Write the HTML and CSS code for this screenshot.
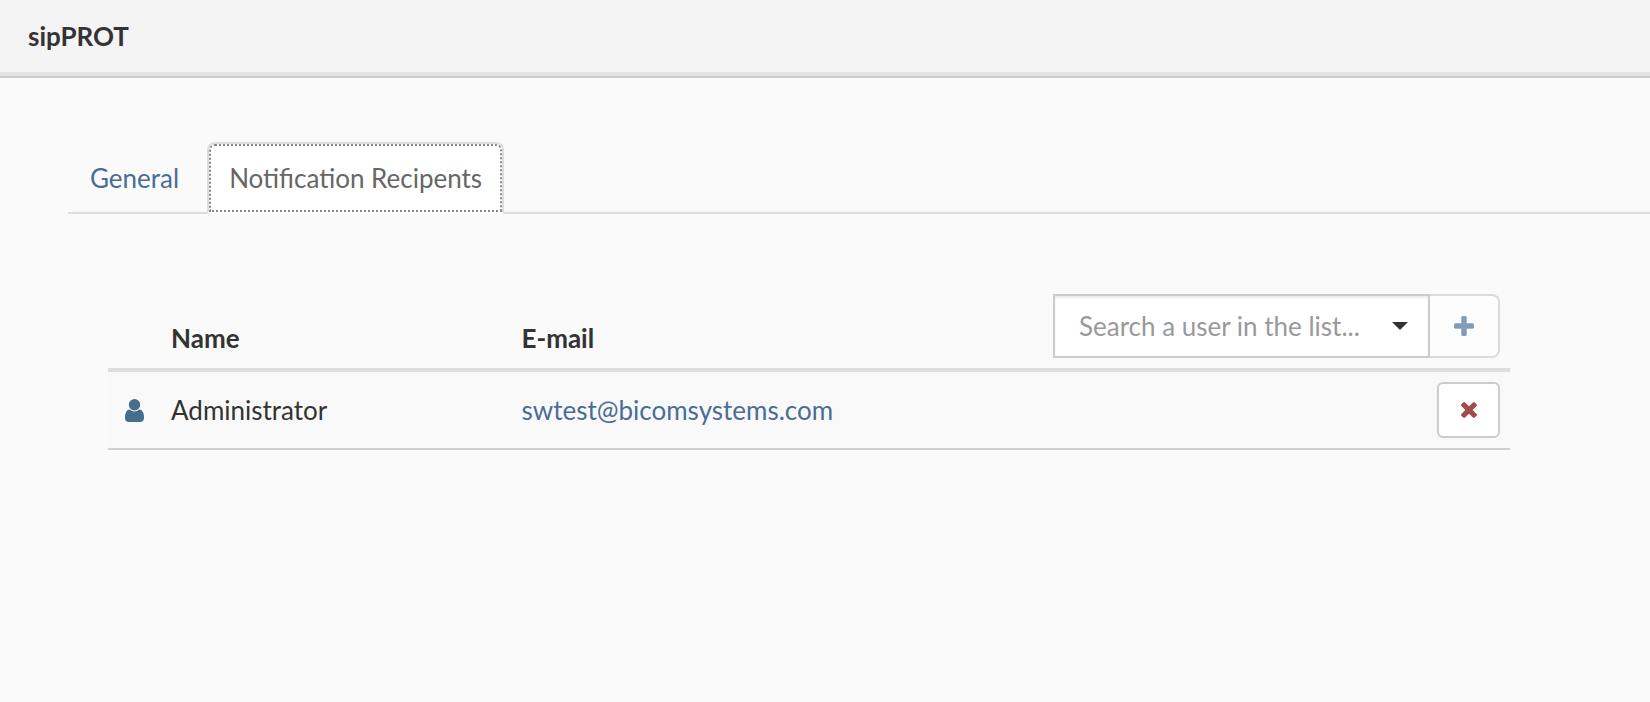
FILE: index.html
```html
<!DOCTYPE html>
<html lang="en">

<head>
  <meta charset="utf-8">
  <title>sipPROT</title>
  <link rel="stylesheet" href="styles.css">
</head>

<body>
  <header class="page-header">
    <h1>sipPROT</h1>
  </header>

  <main class="content">
    <nav class="tabs">
      <a class="tab" href="#general">General</a>
      <a class="tab active" href="#recipients">Notification Recipents</a>
    </nav>

    <section class="panel" id="recipients">
      <table class="recipients">
        <thead>
          <tr>
            <th class="col-icon"></th>
            <th class="col-name">Name</th>
            <th class="col-email">E-mail</th>
            <th class="col-actions">
              <div class="user-search">
                <div class="select-wrap">
                  <select id="user-select" aria-label="Search a user in the list">
                    <option>Search a user in the list...</option>
                  </select>
                  <svg class="caret" viewBox="0 0 16 8"><path d="M0 0h16L8 8z"/></svg>
                </div>
                <button class="btn-add" type="button" aria-label="Add" disabled>
                  <svg viewBox="192 128 1408 1408"><path d="M1600 736v192q0 40-28 68t-68 28h-416v416q0 40-28 68t-68 28h-192q-40 0-68-28t-28-68v-416h-416q-40 0-68-28t-28-68v-192q0-40 28-68t68-28h416v-416q0-40 28-68t68-28h192q40 0 68 28t28 68v416h416q40 0 68 28t28 68z"/></svg>
                </button>
              </div>
            </th>
          </tr>
        </thead>
        <tbody>
          <tr>
            <td class="col-icon">
              <svg class="icon-user" viewBox="256 128 1280 1536"><path d="M1536 1399q0 109-62.5 187t-150.5 78h-854q-88 0-150.5-78t-62.5-187q0-85 8.5-160.5t31.5-152 58.5-131 94-89 134.5-34.5q131 128 313 128t313-128q76 0 134.5 34.5t94 89 58.5 131 31.5 152 8.5 160.5zm-256-887q0 159-112.5 271.5t-271.5 112.5-271.5-112.5-112.5-271.5 112.5-271.5 271.5-112.5 271.5 112.5 112.5 271.5z"/></svg>
            </td>
            <td>Administrator</td>
            <td><a href="mailto:swtest@bicomsystems.com">swtest@bicomsystems.com</a></td>
            <td class="col-actions">
              <button class="btn-remove" type="button" aria-label="Remove">
                <svg viewBox="302 366 1188 1188"><path d="M1490 1322q0 40-28 68l-136 136q-28 28-68 28t-68-28l-294-294-294 294q-28 28-68 28t-68-28l-136-136q-28-28-28-68t28-68l294-294-294-294q-28-28-28-68t28-68l136-136q28-28 68-28t68 28l294 294 294-294q28-28 68-28t68 28l136 136q28 28 28 68t-28 68l-294 294 294 294q28 28 28 68z"/></svg>
              </button>
            </td>
          </tr>
        </tbody>
      </table>
    </section>
  </main>
</body>

</html>
```

FILE: styles.css
```css
* {
  box-sizing: border-box;
}

body {
  margin: 0;
  background-color: #fafafa;
  color: #333;
  font-family: Lato, "Liberation Sans", sans-serif;
  font-size: 26px;
  line-height: 36px;
}

a {
  color: #4a6d98;
  text-decoration: none;
}

svg {
  display: block;
  fill: currentColor;
}

.page-header {
  padding: 18px 28px 22px;
  background-color: #f4f4f4;
  border-bottom: 2px solid #ccc;
  box-shadow: inset 0 -4px #e3e3e3;
}

.page-header h1 {
  margin: 0;
  font-size: 26px;
  font-weight: bold;
}

.content {
  padding: 64px 0 0 68px;
}

/* tabs */
.tabs {
  display: flex;
  gap: 6px;
  border-bottom: 2px solid #ddd;
}

.tab {
  padding: 16px 20px;
  margin-bottom: -2px;
  border: 2px solid transparent;
  border-radius: 8px 8px 0 0;
}

.tab.active {
  color: #666;
  background-color: #fff;
  border-color: #ddd;
  border-bottom-color: #fff;
  outline: 2px dotted #888;
  outline-offset: -4px;
}

.panel {
  padding: 70px 140px 0 40px;
}

/* recipients table */
.recipients {
  width: 100%;
  table-layout: fixed;
  border-collapse: separate;
  border-spacing: 0;
}

.recipients th,
.recipients td {
  padding: 10px;
  text-align: left;
}

.recipients th {
  line-height: 40px;
  vertical-align: bottom;
  border-bottom: 4px solid #ddd;
}

.recipients td {
  background-color: #f9f9f9;
  border-bottom: 2px solid #d0d0d0;
}

.recipients .col-icon {
  width: 53px;
}

.col-name,
.col-email {
  width: 25%;
}

.recipients th.col-actions,
.recipients td.col-actions {
  text-align: right;
}

.icon-user {
  width: 19px;
  height: 23px;
  margin: 0 auto;
  color: #446e8c;
}

/* user search */
.user-search {
  display: flex;
  justify-content: flex-end;
}

.select-wrap {
  position: relative;
  width: 377px;
}

.select-wrap select {
  display: block;
  width: 100%;
  height: 64px;
  padding: 0 24px;
  appearance: none;
  border: 2px solid #ccc;
  border-radius: 0;
  background-color: #fff;
  box-shadow: inset 0 2px 2px rgba(0, 0, 0, 0.075);
  color: #999;
  font: inherit;
  font-weight: normal;
}

.caret {
  position: absolute;
  top: 28px;
  right: 22px;
  width: 16px;
  height: 8px;
  color: #333;
  pointer-events: none;
}

button {
  display: inline-flex;
  align-items: center;
  justify-content: center;
  padding: 0;
  background-color: #fff;
  border: 2px solid #ccc;
  border-radius: 6px;
}

.btn-add {
  width: 70px;
  height: 64px;
  border-left: none;
  border-radius: 0 8px 8px 0;
  color: #426a9b;
  opacity: 0.65;
}

.btn-add svg {
  width: 20px;
  height: 20px;
}

.btn-remove {
  width: 63px;
  height: 56px;
  vertical-align: top;
  color: #a04c48;
}

.btn-remove svg {
  width: 16px;
  height: 16px;
}
```
